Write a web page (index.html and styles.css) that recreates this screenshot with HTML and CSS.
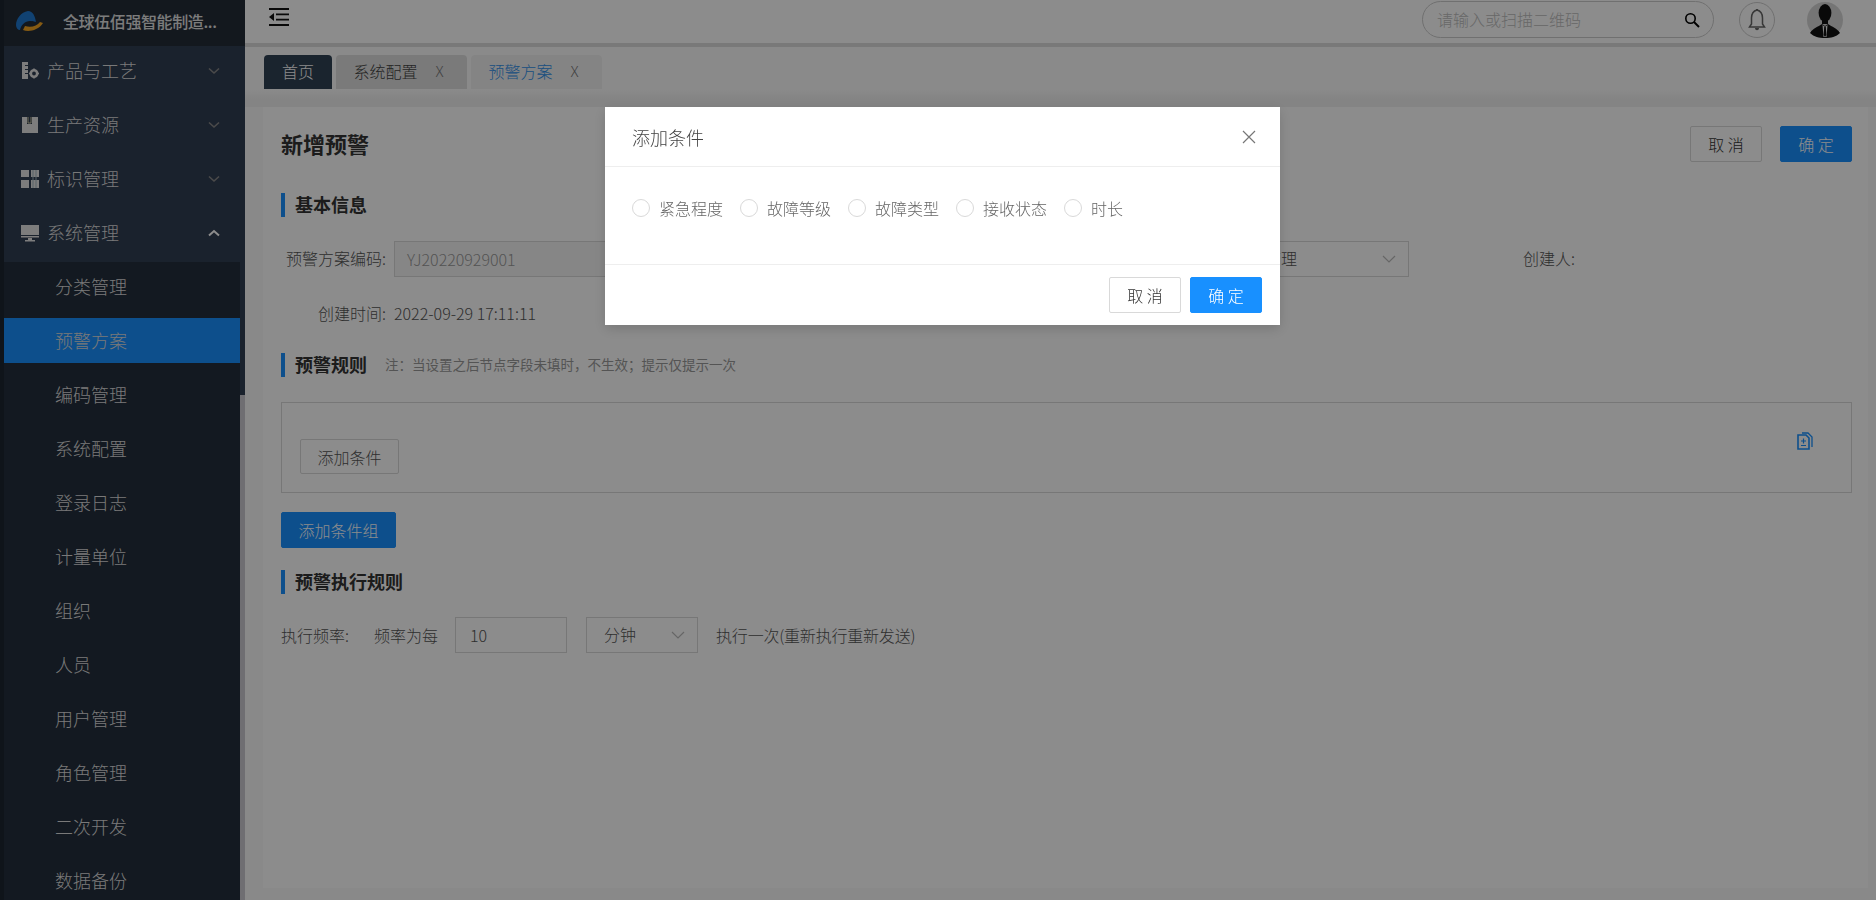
FILE: index.html
```html
<!DOCTYPE html>
<html lang="zh-CN">
<head>
    <meta charset="UTF-8" />
    <title>新增预警</title>
    <link rel="stylesheet" href="styles.css">
</head>
<body>

<div class="app">
    <!-- Sidebar -->
    <aside class="sidebar">
        <div class="brand">
            <svg class="logo" viewBox="0 0 27 20" width="27" height="20">
                <path d="M12 0 C5 1 0 8 0 14 C0 17 2 19 4 19 C5 14 9 10 14 10 C17 10 20 11 20 11 C19 5 17 0 12 0 Z" fill="#1f78d0"/>
                <path d="M7 19 C12 21 22 20 27 12 L24 11 C21 15 15 17 9 15 Z" fill="#f5a623"/>
            </svg>
            <span class="brand-name">全球伍佰强智能制造...</span>
        </div>
        <nav class="menu">
            <div class="menu-item">
                <svg class="menu-icon" viewBox="0 0 18 18" width="18" height="18">
                    <path d="M1 0 H7 V17 H1 Z M4 3 V4 H7 V3 Z M4 7 V8 H7 V7 Z M4 11 V12 H7 V11 Z" fill="#e4e4e4" fill-rule="evenodd"/>
                    <circle cx="13" cy="11.5" r="3.2" fill="none" stroke="#e4e4e4" stroke-width="2.6"/>
                    <path d="M13 6.5 V8 M13 15 V16.5 M8 11.5 H9.5 M16.5 11.5 H18" stroke="#e4e4e4" stroke-width="1.6"/>
                </svg>
                <span class="menu-text">产品与工艺</span>
                <svg class="menu-arrow" viewBox="0 0 12 8" width="12" height="8"><path d="M1 1.5 L6 6 L11 1.5" fill="none" stroke="#888" stroke-width="1.6"/></svg>
            </div>
            <div class="menu-item">
                <svg class="menu-icon" viewBox="0 0 18 18" width="18" height="18">
                    <path d="M1 1 H6 V8 H11 V1 H17 V17 H1 Z" fill="#e4e4e4"/>
                    <path d="M7 1 V7 H10 V1" fill="none" stroke="#cfc9a8" stroke-width="1"/>
                </svg>
                <span class="menu-text">生产资源</span>
                <svg class="menu-arrow" viewBox="0 0 12 8" width="12" height="8"><path d="M1 1.5 L6 6 L11 1.5" fill="none" stroke="#888" stroke-width="1.6"/></svg>
            </div>
            <div class="menu-item">
                <svg class="menu-icon" viewBox="0 0 18 18" width="18" height="18">
                    <path d="M0 0 H8 V7 H0 Z M10 0 H18 V7 H10 Z M0 10 H8 V18 H0 Z M10 10 H18 V18 H10 Z" fill="#e4e4e4"/>
                    <path d="M12 0 V18 M15 0 V18" stroke="#9fb4bd" stroke-width="1"/>
                </svg>
                <span class="menu-text">标识管理</span>
                <svg class="menu-arrow" viewBox="0 0 12 8" width="12" height="8"><path d="M1 1.5 L6 6 L11 1.5" fill="none" stroke="#888" stroke-width="1.6"/></svg>
            </div>
            <div class="menu-item">
                <svg class="menu-icon" viewBox="0 0 18 18" width="18" height="18">
                    <path d="M0 1 H18 V11 H0 Z M0 12 H18 V13.5 H0 Z M7 14 H11 V16 H14 V17.5 H4 V16 H7 Z" fill="#e4e4e4"/>
                </svg>
                <span class="menu-text">系统管理</span>
                <svg class="menu-arrow" viewBox="0 0 12 8" width="12" height="8"><path d="M1 6.5 L6 2 L11 6.5" fill="none" stroke="#fff" stroke-width="2"/></svg>
            </div>
            <div class="submenu">
                <div class="sub-item">分类管理</div>
                <div class="sub-item active">预警方案</div>
                <div class="sub-item">编码管理</div>
                <div class="sub-item">系统配置</div>
                <div class="sub-item">登录日志</div>
                <div class="sub-item">计量单位</div>
                <div class="sub-item">组织</div>
                <div class="sub-item">人员</div>
                <div class="sub-item">用户管理</div>
                <div class="sub-item">角色管理</div>
                <div class="sub-item">二次开发</div>
                <div class="sub-item">数据备份</div>
            </div>
        </nav>
        <div class="scroll-thumb"></div>
    </aside>

    <div class="main">
        <!-- Top bar -->
        <header class="topbar">
            <svg class="fold-icon" viewBox="0 0 20 18" width="20" height="18">
                <path d="M0 1 H20 M7 6.3 H20 M7 11.6 H20 M0 17 H20" stroke="#111" stroke-width="1.8"/>
                <path d="M5 5 V13 L0 9 Z" fill="#111"/>
            </svg>
            <div class="search">
                <span class="search-hint">请输入或扫描二维码</span>
                <svg viewBox="0 0 16 16" width="16" height="16">
                    <circle cx="6.5" cy="6.5" r="4.7" fill="none" stroke="#000" stroke-width="1.6"/>
                    <path d="M10 10 L15 15" stroke="#000" stroke-width="2"/>
                </svg>
            </div>
            <div class="bell">
                <svg viewBox="0 0 18 24" width="18" height="24">
                    <path d="M9 2 C5 3 3.5 6 3.5 10 V16 L1.5 19 H16.5 L14.5 16 V10 C14.5 6 13 3 9 2 Z" fill="none" stroke="#666" stroke-width="1.5"/>
                    <path d="M7 20 C7 23 11 23 11 20 Z M8 1 H10 V2.5 H8 Z" fill="#666"/>
                </svg>
            </div>
            <svg class="avatar" viewBox="0 0 36 36" width="36" height="36">
                <circle cx="18" cy="18" r="18" fill="#d6d6d6"/>
                <ellipse cx="18" cy="11" rx="6.4" ry="9" fill="#111"/>
                <path d="M15 18 H21 V22 H15 Z" fill="#111"/>
                <path d="M3 31 C6 26 11 25 15 22 L18 24 L21 22 C25 25 30 26 33 31 C29 35 24 36 18 36 C12 36 7 35 3 31 Z" fill="#111"/>
                <path d="M15.5 23 L18 25 L20.5 23 L19.5 35 H16.5 Z" fill="#eee"/>
                <path d="M17.2 25 H18.8 L19.4 33 L18 35 L16.6 33 Z" fill="#111"/>
            </svg>
        </header>

        <!-- Tabs -->
        <div class="tabs">
            <div class="tab tab-home">首页</div>
            <div class="tab tab-gray"><span>系统配置</span><span class="tab-close">X</span></div>
            <div class="tab tab-current"><span>预警方案</span><span class="tab-close">X</span></div>
        </div>

        <!-- Form card -->
        <div class="card">
            <div class="title-row">
                <h2>新增预警</h2>
                <div class="title-btns">
                    <button class="btn">取 消</button>
                    <button class="btn btn-primary">确 定</button>
                </div>
            </div>

            <div class="section first">基本信息</div>
            <div class="form-row">
                <label class="form-label">预警方案编码:</label>
                <div class="input code-input">YJ20220929001</div>
                <div class="input select owner-select">
                    <span class="raise">系统管理</span>
                    <svg viewBox="0 0 14 8" width="14" height="8"><path d="M1 1 L7 7 L13 1" fill="none" stroke="#bbb" stroke-width="1.2"/></svg>
                </div>
                <label class="creator">创建人:</label>
            </div>
            <div class="form-row time-row">
                <label class="form-label">创建时间:</label>
                <span class="time-value">2022-09-29 17:11:11</span>
            </div>

            <div class="section rule">预警规则<span class="note">注：当设置之后节点字段未填时，不生效；提示仅提示一次</span></div>
            <div class="group-box">
                <button class="btn btn-add">添加条件</button>
                <svg class="doc-icon" viewBox="0 0 16 18" width="16" height="18">
                    <path d="M1 3 H9 L12 6 V17 H1 Z" fill="none" stroke="#1890ff" stroke-width="1.6"/>
                    <path d="M5 1 H11 L15 5 V15" fill="none" stroke="#1890ff" stroke-width="1.3"/>
                    <path d="M4 9 H9 M6.5 6.5 V11.5 M4 13.5 H9" stroke="#1890ff" stroke-width="1.2"/>
                </svg>
            </div>
            <button class="btn btn-primary btn-group">添加条件组</button>

            <div class="section exec">预警执行规则</div>
            <div class="exec-row">
                <span class="exec-label">执行频率:</span>
                <span class="exec-prefix">频率为每</span>
                <div class="input small-input">10</div>
                <div class="input select small-select">
                    <span class="raise">分钟</span>
                    <svg viewBox="0 0 14 8" width="14" height="8"><path d="M1 1 L7 7 L13 1" fill="none" stroke="#bbb" stroke-width="1.2"/></svg>
                </div>
                <span class="exec-tail">执行一次(重新执行重新发送)</span>
            </div>
        </div>
    </div>
</div>

<div class="mask"></div>

<!-- Dialog -->
<div class="modal">
    <div class="modal-head">
        <span>添加条件</span>
        <svg viewBox="0 0 14 14" width="14" height="14"><path d="M1 1 L13 13 M13 1 L1 13" stroke="#777" stroke-width="1.2"/></svg>
    </div>
    <div class="modal-body">
        <label class="radio"><span class="radio-dot"></span>紧急程度</label>
        <label class="radio"><span class="radio-dot"></span>故障等级</label>
        <label class="radio"><span class="radio-dot"></span>故障类型</label>
        <label class="radio"><span class="radio-dot"></span>接收状态</label>
        <label class="radio"><span class="radio-dot"></span>时长</label>
    </div>
    <div class="modal-foot">
        <button class="btn">取 消</button>
        <button class="btn btn-primary">确 定</button>
    </div>
</div>

</body>
</html>
```

FILE: styles.css
```css
* {
    box-sizing: border-box;
}
body {
    margin: 0;
    font-family: "Noto Sans CJK SC", "Noto Sans", sans-serif;
    font-size: 16px;
    font-weight: 300;
    color: #555;
    overflow: hidden;
}
button {
    font-family: inherit;
    font-weight: 300;
}
.app {
    display: flex;
    height: 100vh;
    overflow: hidden;
}

/* sidebar */
.sidebar {
    position: relative;
    width: 245px;
    flex: none;
    border-left: 4px solid #1d2630;
    background-color: #313e52;
    overflow: hidden;
}
.brand {
    display: flex;
    align-items: center;
    height: 46px;
    padding-left: 12px;
    padding-bottom: 5px;
    background-color: #232c38;
}
.logo {
    flex: none;
}
.brand-name {
    margin-left: 20px;
    font-size: 16px;
    font-weight: 500;
    color: #e2e2e2;
    white-space: nowrap;
    letter-spacing: -0.4px;
}
.menu-item {
    display: flex;
    align-items: center;
    height: 54px;
    padding: 0 25px 5px 17px;
    color: #dcdcdc;
    font-size: 18px;
}
.menu-icon {
    flex: none;
}
.menu-text {
    margin-left: 8px;
    padding-bottom: 2px;
    flex: 1;
}
.submenu {
    display: flex;
    flex-direction: column;
    gap: 9px;
    width: 236px;
    padding-top: 2px;
    padding-bottom: 40px;
    background-color: #242f3c;
}
.sub-item {
    display: flex;
    align-items: center;
    flex: none;
    height: 45px;
    padding-left: 51px;
    padding-bottom: 2px;
    font-size: 18px;
    color: #dcdcdc;
}
.sub-item.active {
    background-color: #1890ff;
}
.scroll-thumb {
    position: absolute;
    right: 0;
    top: 395px;
    bottom: 0;
    width: 5px;
    background-color: #cac8cf;
}

/* top bar */
.main {
    flex: 1;
    min-width: 0;
    display: flex;
    flex-direction: column;
    background-color: #fafafa;
}
.topbar {
    display: flex;
    align-items: center;
    flex: none;
    height: 47px;
    padding: 0 33px 4px 24px;
    background-color: #fff;
    border-bottom: 4px solid #dcdcdc;
}
.fold-icon {
    flex: none;
    margin-bottom: 6px;
}
.search {
    display: flex;
    align-items: center;
    justify-content: space-between;
    width: 292px;
    height: 37px;
    margin-left: auto;
    padding: 0 13px 0 14px;
    border: 1px solid #ccc;
    border-radius: 19px;
}
.search-hint {
    padding-bottom: 2px;
    color: #bdbdbd;
    font-size: 16px;
}
.bell {
    display: flex;
    align-items: center;
    justify-content: center;
    width: 36px;
    height: 36px;
    margin-left: 25px;
    border: 1px solid #ccc;
    border-radius: 50%;
}
.avatar {
    flex: none;
    margin-left: 32px;
}

/* tabs */
.tabs {
    display: flex;
    gap: 4px;
    flex: none;
    height: 60px;
    padding: 8px 0 0 19px;
    background: linear-gradient(#fcfcfc 0, #fcfcfc 42px, #f1f1f1 52px, #f1f1f1 100%);
}
.tab {
    display: flex;
    align-items: center;
    justify-content: center;
    height: 34px;
    padding-bottom: 3px;
    border-radius: 4px 4px 0 0;
    font-size: 16px;
}
.tab-home {
    width: 68px;
    background-color: #314355;
    color: #fff;
}
.tab-gray {
    width: 131px;
    padding-right: 6px;
    background-color: #dedede;
    color: #444;
}
.tab-current {
    width: 131px;
    padding-right: 6px;
    background-color: #f1f1f1;
    color: #2f8fe8;
}
.tab-close {
    margin-left: 18px;
    color: #777;
    font-size: 15px;
}

/* card */
.card {
    flex: 1;
    margin: 0 8px 12px 18px;
    padding: 19px 16px 0 18px;
    background-color: #fff;
}
.title-row {
    display: flex;
    align-items: center;
    justify-content: space-between;
    height: 36px;
}
h2 {
    margin: 0 0 3px;
    font-size: 22px;
    font-weight: 700;
    color: #333;
}
.title-btns {
    display: flex;
    gap: 18px;
}
.btn {
    width: 72px;
    height: 36px;
    padding: 0;
    background-color: #fff;
    border: 1px solid #d9d9d9;
    border-radius: 2px;
    color: #333;
    font-size: 16px;
}
.btn-primary {
    background-color: #1890ff;
    border-color: #1890ff;
    color: #fff;
}
.section {
    display: flex;
    align-items: center;
    height: 24px;
    padding-left: 10px;
    padding-bottom: 2px;
    border-left: 4px solid #1890ff;
    font-size: 18px;
    font-weight: 700;
    color: #333;
}
.section.first {
    margin-top: 31px;
}
.section.rule {
    margin-top: 22px;
}
.section.exec {
    margin-top: 22px;
}
.note {
    margin-left: 18px;
    font-size: 13.5px;
    font-weight: 400;
    color: #999;
}
.form-row {
    display: flex;
    align-items: center;
    height: 35px;
    margin-top: 24px;
}
.form-row.time-row {
    margin-top: 20px;
}
.form-label {
    width: 105px;
    flex: none;
    padding-bottom: 2px;
    text-align: right;
}
.input {
    display: flex;
    align-items: center;
    height: 36px;
    border: 1px solid #d9d9d9;
    color: #555;
}
.raise {
    padding-bottom: 2px;
}
.code-input {
    width: 300px;
    margin-left: 8px;
    padding-left: 12px;
    font-size: 16px;
    color: #999;
    background-color: #f5f5f5;
}
.select {
    justify-content: space-between;
    padding: 0 12px;
}
.owner-select {
    width: 189px;
    margin-left: 526px;
}
.creator {
    margin-left: 114px;
    padding-bottom: 2px;
}
.time-value {
    margin-left: 8px;
    padding-bottom: 2px;
}
.group-box {
    display: flex;
    justify-content: space-between;
    height: 91px;
    margin-top: 25px;
    padding: 36px 38px 0 18px;
    border: 1px solid #d9d9d9;
}
.btn-add {
    width: 99px;
    height: 35px;
    color: #555;
}
.doc-icon {
    margin-top: -7px;
}
.btn-group {
    display: block;
    width: 115px;
    margin-top: 19px;
}
.exec-row {
    display: flex;
    align-items: center;
    height: 36px;
    margin-top: 23px;
}
.exec-prefix {
    margin-left: 25px;
}
.small-input {
    width: 112px;
    margin-left: 17px;
    padding-left: 14px;
}
.small-select {
    width: 112px;
    margin-left: 19px;
    margin-right: 18px;
    padding-left: 17px;
}
.exec-tail {
    letter-spacing: -0.2px;
}

/* mask + dialog */
.mask {
    position: fixed;
    top: 0;
    right: 0;
    bottom: 0;
    left: 0;
    background-color: rgba(0, 0, 0, 0.45);
}
.modal {
    position: fixed;
    left: 605px;
    top: 107px;
    width: 675px;
    height: 218px;
    background-color: #fff;
    box-shadow: 0 4px 12px rgba(0, 0, 0, 0.15);
}
.modal-head {
    display: flex;
    align-items: center;
    justify-content: space-between;
    height: 60px;
    padding: 0 24px 0 27px;
    border-bottom: 1px solid #eee;
    font-size: 18px;
    color: #444;
}
.modal-body {
    display: flex;
    gap: 17px;
    height: 98px;
    padding: 32px 0 0 27px;
    border-bottom: 1px solid #eee;
}
.radio {
    display: flex;
    align-items: center;
    height: 18px;
    color: #666;
}
.radio-dot {
    width: 18px;
    height: 18px;
    margin-right: 9px;
    border: 1px solid #d9d9d9;
    border-radius: 50%;
}
.modal-foot {
    display: flex;
    justify-content: flex-end;
    gap: 9px;
    padding: 12px 18px 0 0;
}
```
